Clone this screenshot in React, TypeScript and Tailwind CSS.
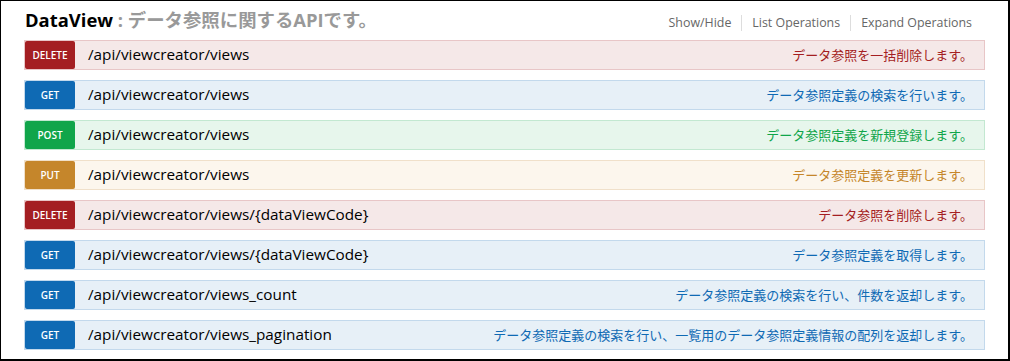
const font = "font-['Open_Sans','Noto_Sans_CJK_JP',sans-serif]";

type Method = "delete" | "get" | "post" | "put";

const styles: Record<Method, { row: string; badge: string; desc: string }> = {
  delete: {
    row: "bg-[#f5e8e8] border-[#e8c6c7]",
    badge: "bg-[#a41e22]",
    desc: "text-[#a41e22]",
  },
  get: {
    row: "bg-[#e7f0f7] border-[#c3d9ec]",
    badge: "bg-[#0f6ab4]",
    desc: "text-[#0f6ab4]",
  },
  post: {
    row: "bg-[#e7f6ec] border-[#c3e8d1]",
    badge: "bg-[#10a54a]",
    desc: "text-[#10a54a]",
  },
  put: {
    row: "bg-[#fcf6ed] border-[#f0e0ca]",
    badge: "bg-[#c5862b]",
    desc: "text-[#c5862b]",
  },
};

const operations: { method: Method; path: string; summary: string }[] = [
  { method: "delete", path: "/api/viewcreator/views", summary: "データ参照を一括削除します。" },
  { method: "get", path: "/api/viewcreator/views", summary: "データ参照定義の検索を行います。" },
  { method: "post", path: "/api/viewcreator/views", summary: "データ参照定義を新規登録します。" },
  { method: "put", path: "/api/viewcreator/views", summary: "データ参照定義を更新します。" },
  { method: "delete", path: "/api/viewcreator/views/{dataViewCode}", summary: "データ参照を削除します。" },
  { method: "get", path: "/api/viewcreator/views/{dataViewCode}", summary: "データ参照定義を取得します。" },
  { method: "get", path: "/api/viewcreator/views_count", summary: "データ参照定義の検索を行い、件数を返却します。" },
  {
    method: "get",
    path: "/api/viewcreator/views_pagination",
    summary: "データ参照定義の検索を行い、一覧用のデータ参照定義情報の配列を返却します。",
  },
];

function OperationRow({ method, path, summary }: { method: Method; path: string; summary: string }) {
  const s = styles[method];
  return (
    <li className={`flex h-[30px] items-center border ${s.row}`}>
      <span
        className={`flex h-[28px] w-[50px] shrink-0 items-center justify-center rounded-[2px] pt-px text-[10px] font-semibold uppercase text-white ${s.badge}`}
      >
        {method}
      </span>
      <span className="pl-[13px] text-[15.3px] leading-none text-[#000]">{path}</span>
      <span className={`ml-auto pr-[11px] text-[13px] leading-none ${s.desc}`}>{summary}</span>
    </li>
  );
}

export default function App() {
  return (
    <div
      className={`h-[361px] w-[1010px] overflow-hidden border-t border-l border-r-2 border-b-2 border-black bg-white ${font}`}
    >
      <div className="pl-[23px] pr-[23px]">
        {/* Resource heading */}
        <div className="flex h-[39px] items-baseline justify-between pt-[7px]">
          <h2 className="pl-px text-[18.4px] font-bold leading-[24px] text-black">
            DataView
            <span className="text-[#999]"> : データ参照に関するAPIです。</span>
          </h2>
          <ul className="flex items-center pr-[13px] text-[12.4px] text-[#666]">
            <li className="px-[10px]">Show/Hide</li>
            <li className="h-[16px] w-px bg-[#ddd]" />
            <li className="px-[10px]">List Operations</li>
            <li className="h-[16px] w-px bg-[#ddd]" />
            <li className="pl-[10px]">Expand Operations</li>
          </ul>
        </div>

        {/* Operations */}
        <ul className="flex flex-col gap-[10px]">
          {operations.map((op, i) => (
            <OperationRow key={i} {...op} />
          ))}
        </ul>
      </div>
    </div>
  );
}
